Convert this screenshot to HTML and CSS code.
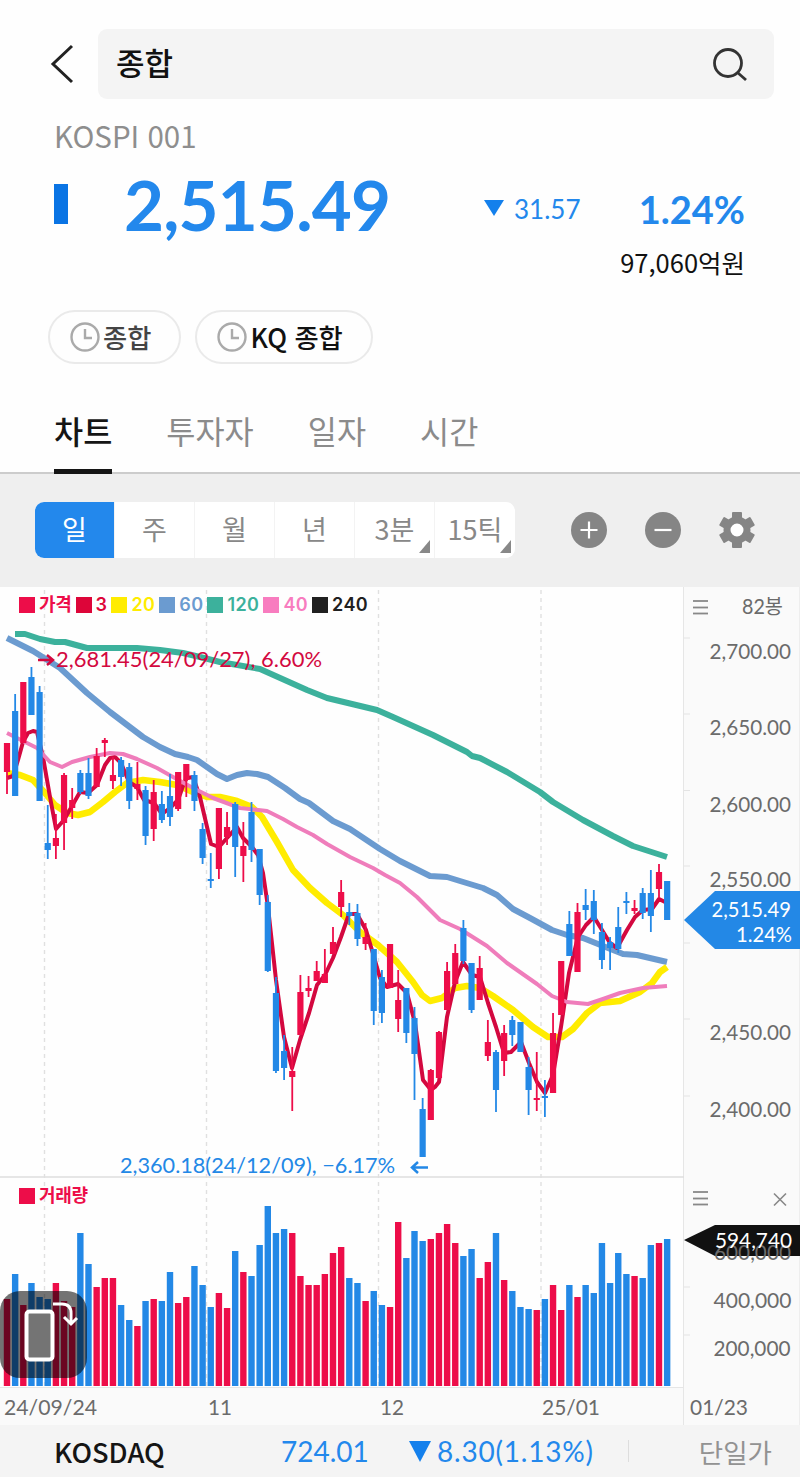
FILE: index.html
```
<!DOCTYPE html>
<html lang="ko">
<head>
    <meta charset="UTF-8">
    <meta name="viewport" content="width=device-width, initial-scale=1.0">
    <title>KOSPI 종합</title>
    <link rel="stylesheet" href="styles.css">
</head>
<body>
    <header class="search-header">
        <svg class="back-icon" width="26" height="42" viewBox="0 0 26 42"><path d="M22 3L3 21l19 18"/></svg>
        <div class="search-box">
            <span>종합</span>
            <svg width="36" height="36" viewBox="0 0 36 36"><circle cx="16" cy="17" r="13.5"/><path d="M25.5 26.5L34 34"/></svg>
        </div>
    </header>

    <section class="quote">
        <div class="quote-code">KOSPI 001</div>
        <div class="quote-row">
            <span class="mini-candle"></span>
            <span class="price">2,515.49</span>
            <span class="arrow-down"></span>
            <span class="change">31.57</span>
            <span class="rate">1.24%</span>
        </div>
        <div class="amount">97,060억원</div>
    </section>

    <div class="recent">
        <div class="chip">
            <svg width="30" height="30" viewBox="0 0 30 30"><circle cx="15" cy="15" r="13.5"/><path d="M15 7v9h7"/></svg>
            <span class="chip-light">종합</span>
        </div>
        <div class="chip">
            <svg width="30" height="30" viewBox="0 0 30 30"><circle cx="15" cy="15" r="13.5"/><path d="M15 7v9h7"/></svg>
            <span>KQ 종합</span>
        </div>
    </div>

    <nav class="tabs">
        <span class="tab active">차트</span>
        <span class="tab">투자자</span>
        <span class="tab">일자</span>
        <span class="tab">시간</span>
    </nav>

    <div class="toolbar">
        <div class="periods">
            <span class="period selected">일</span>
            <span class="period">주</span>
            <span class="period">월</span>
            <span class="period">년</span>
            <span class="period more">3분</span>
            <span class="period more">15틱</span>
        </div>
        <div class="tools">
            <svg width="38" height="38" viewBox="0 0 38 38"><circle cx="19" cy="19" r="18"/><path d="M19 10.5v17M10.5 19h17"/></svg>
            <svg width="38" height="38" viewBox="0 0 38 38"><circle cx="19" cy="19" r="18"/><path d="M10.5 19h17"/></svg>
            <svg width="38" height="38" viewBox="0 0 38 38"><g id="gear"></g><circle class="gear-body" cx="19" cy="19" r="10"/></svg>
        </div>
    </div>

    <main class="chart-area">
        <svg id="chart" class="chart" width="800" height="838" viewBox="0 587 800 838"></svg>
        <div class="legend">
            <span class="c-price">가격</span>
            <span class="c-ma3">3</span>
            <span class="c-ma20">20</span>
            <span class="c-ma60">60</span>
            <span class="c-ma120">120</span>
            <span class="c-ma40">40</span>
            <span class="c-ma240">240</span>
        </div>
        <div class="legend volume-legend"><span class="c-price">거래량</span></div>
        <div class="rotate-button">
            <svg width="87" height="87" viewBox="0 0 87 87">
                <rect x="26.500" y="20.500" width="26" height="48" rx="3"/>
                <path d="M53 13h9q9 0 9 9v10M64 26l7 7 6-6"/>
            </svg>
        </div>
    </main>

    <footer class="ticker">
        <span class="ticker-name">KOSDAQ</span>
        <span class="ticker-price">724.01</span>
        <span class="arrow-down big"></span>
        <span class="ticker-change">8.30(1.13%)</span>
        <span class="ticker-line"></span>
        <span class="ticker-type">단일가</span>
    </footer>

    <script src="chart.js"></script>
</body>
</html>
```

FILE: styles.css
```
* {
    box-sizing: border-box;
}

body {
    margin: 0;
    width: 800px;
    background: #fefefe;
    color: #111;
    font-family: "Noto Sans CJK KR", sans-serif;
}

svg {
    display: block;
    fill: none;
}

.search-header {
    display: flex;
    align-items: center;
    gap: 22px;
    height: 99px;
    padding: 29px 26px 0 50px;
}

.back-icon {
    stroke: #222;
    stroke-width: 3;
}

.search-box {
    flex: 1;
    display: flex;
    align-items: center;
    justify-content: space-between;
    height: 70px;
    padding: 0 26px 0 18px;
    border-radius: 9px;
    background: #f4f4f4;
    font-size: 31px;
    font-weight: 500;
}

.search-box span {
    line-height: 66px;
    padding-bottom: 4px;
}

.search-box svg {
    stroke: #333;
    stroke-width: 2.8;
}

.quote {
    height: 211px;
    padding: 16px 55px 0 54px;
}

.quote-code {
    color: #8e8e8e;
    font-size: 29.5px;
    line-height: 40px;
}

.quote-row {
    display: flex;
    align-items: center;
    height: 92px;
    color: #2388ec;
    font-family: Lato, sans-serif;
}

.mini-candle {
    width: 14px;
    height: 40px;
    margin-top: 6px;
    background: #0a74e4;
}

.price {
    flex: none;
    width: 416px;
    padding: 8px 0 0 56px;
    font-size: 69px;
    font-weight: 700;
    line-height: 92px;
    letter-spacing: -0.8px;
}

.arrow-down {
    border: 10px solid transparent;
    border-top: 16px solid #1480ec;
    border-bottom: 0;
}

.quote-row .arrow-down {
    margin-top: 14px;
}

.change {
    margin-left: 10px;
    font-size: 26px;
    padding-top: 16px;
}

.rate {
    flex: 1;
    text-align: right;
    font-size: 38px;
    font-weight: 700;
    padding-top: 15px;
}

.amount {
    text-align: right;
    font-size: 25.5px;
    line-height: 30px;
}

.recent {
    display: flex;
    gap: 14px;
    padding-left: 48px;
}

.chip {
    display: flex;
    align-items: center;
    height: 54px;
    padding: 0 28px 0 20px;
    border: 2px solid #eaeaea;
    border-radius: 27px;
    font-size: 26.3px;
    font-weight: 500;
    line-height: 48px;
}

.chip span {
    margin-left: 3px;
}

.chip-light {
    color: #444;
}

.chip svg {
    stroke: #aaa;
    stroke-width: 2.4;
}

.tabs {
    display: flex;
    gap: 54px;
    height: 110px;
    padding: 39px 0 0 54px;
    border-bottom: 2px solid #ccc;
}

.tab {
    height: 71px;
    font-size: 31.7px;
    font-weight: 400;
    line-height: 54px;
    color: #8b8b8b;
}

.tab.active {
    border-bottom: 5px solid #151515;
    color: #151515;
    font-weight: 500;
}

.toolbar {
    display: flex;
    align-items: center;
    height: 113px;
    padding: 0 44px 2px 35px;
    justify-content: space-between;
    background: #efefef;
}

.periods {
    display: flex;
    height: 56px;
    border-radius: 9px;
    background: #fff;
    overflow: hidden;
}

.period {
    position: relative;
    width: 80px;
    border-right: 1px solid #f3f3f3;
    color: #888;
    font-size: 27px;
    line-height: 54px;
    text-align: center;
}

.period:last-child {
    border: 0;
}

.period.selected {
    background: #2388ec;
    color: #fff;
}

.period.more::after {
    content: "";
    position: absolute;
    right: 4px;
    bottom: 5px;
    border-left: 11px solid transparent;
    border-bottom: 13px solid #888;
}

.tools {
    display: flex;
    gap: 36px;
}

.tools circle {
    fill: #858585;
}

.tools path {
    stroke: #fff;
    stroke-width: 2.2;
}

.tools #gear rect {
    fill: #858585;
}

.tools .gear-body {
    fill: #fff;
    stroke: #858585;
    stroke-width: 7;
}

.chart-area {
    position: relative;
    height: 838px;
}

.legend {
    position: absolute;
    top: 5px;
    left: 19px;
    display: flex;
    gap: 4px;
    font-family: Inter, "Noto Sans CJK KR", sans-serif;
    font-size: 18px;
    font-weight: 600;
    line-height: 26px;
}

.legend span {
    display: flex;
    align-items: center;
    gap: 4px;
    letter-spacing: 0.4px;
}

.legend span::before {
    content: "";
    width: 16px;
    height: 16px;
    background: currentColor;
}

.volume-legend {
    top: 596px;
}

.c-price { color: #ed0d49; }
.c-ma3 { color: #dd0539; }
.c-ma20 { color: #ffec00; }
.c-ma60 { color: #6b9bd0; }
.c-ma120 { color: #3cb19c; }
.c-ma40 { color: #f87cbf; }
.c-ma240 { color: #202020; }

.legend .c-price {
    letter-spacing: -0.3px;
}

.rotate-button {
    position: absolute;
    left: 0;
    top: 704px;
    border-radius: 20px;
    background: rgba(0, 0, 0, 0.55);
}

.rotate-button svg {
    stroke: #fff;
    stroke-width: 4;
}

.rotate-button rect {
    fill: #747474;
}

.rotate-button path {
    stroke-width: 3;
}

.axis-text {
    fill: #6b6b6b;
    font-family: Lato, "Noto Sans CJK KR", sans-serif;
    font-size: 20.5px;
}

.date-text {
    fill: #6b6b6b;
    font-family: Lato, sans-serif;
    font-size: 22px;
}

.note-text {
    font-family: Lato, sans-serif;
    font-size: 21px;
}

.ticker {
    display: flex;
    align-items: center;
    height: 52px;
    padding: 0 28px 0 54px;
    background: #f4f4f4;
    color: #2388ec;
    font-family: Lato, sans-serif;
    font-size: 28px;
}

.ticker-name {
    width: 227px;
    color: #151515;
    font-family: "Noto Sans CJK KR", sans-serif;
    font-weight: 500;
    font-size: 27.3px;
}

.ticker-price {
    width: 128px;
}

.arrow-down.big {
    border-width: 21px 11px 0;
}

.ticker-change {
    flex: 1;
    margin-left: 6px;
    letter-spacing: 0.8px;
}

.ticker-line {
    width: 1px;
    height: 22px;
    background: #ddd;
}

.ticker-type {
    margin-left: 70px;
    color: #929292;
    font-family: "Noto Sans CJK KR", sans-serif;
    font-size: 26.5px;
}
```

FILE: chart.js
```
const RED = '#ed0d49';
const BLUE = '#2388e6';
const FIRST_X = 7;
const STEP = 8.15;
const VOLUME_BASE = 1386;

// colour, high, body top, body bottom, low, volume top
const candles = [
    ['r', 743, 743, 772, 794, 1299], ['b', 694, 711, 796, 796, 1274], ['r', 682, 682, 743, 743, 1305],
    ['b', 667, 677, 715, 715, 1283], ['b', 686, 692, 801, 801, 1297], ['b', 805, 843, 850, 859, 1299],
    ['r', 814, 838, 846, 859, 1283], ['r', 773, 775, 823, 850, 1301], ['r', 788, 800, 808, 819, 1307],
    ['b', 770, 773, 792, 794, 1233], ['b', 758, 773, 796, 799, 1264], ['r', 748, 756, 787, 787, 1287],
    ['r', 738, 740, 743, 757, 1278], ['r', 757, 775, 781, 789, 1278], ['b', 757, 760, 777, 786, 1305],
    ['b', 763, 767, 801, 809, 1320], ['r', 762, 784, 789, 800, 1326], ['b', 786, 790, 836, 845, 1301],
    ['r', 780, 792, 829, 841, 1299], ['b', 791, 804, 820, 823, 1301], ['b', 774, 796, 817, 826, 1272],
    ['r', 772, 772, 809, 811, 1303], ['r', 764, 764, 780, 797, 1297], ['b', 771, 775, 801, 811, 1266],
    ['b', 823, 829, 858, 864, 1285], ['b', 853, 879, 881, 888, 1307], ['r', 808, 808, 869, 879, 1293],
    ['r', 812, 827, 837, 845, 1308], ['b', 802, 804, 847, 877, 1251], ['r', 822, 846, 856, 882, 1272],
    ['b', 802, 812, 850, 862, 1276], ['b', 849, 849, 895, 905, 1245], ['b', 895, 902, 971, 972, 1206],
    ['b', 977, 993, 1071, 1073, 1233], ['b', 1035, 1051, 1068, 1080, 1229], ['r', 1047, 1071, 1077, 1111, 1233],
    ['r', 975, 992, 1035, 1035, 1276], ['r', 976, 988, 991, 997, 1285], ['r', 961, 971, 981, 981, 1285],
    ['r', 949, 974, 983, 983, 1274], ['r', 927, 942, 954, 954, 1253], ['r', 880, 892, 907, 917, 1247],
    ['b', 903, 912, 916, 925, 1278], ['b', 904, 913, 939, 946, 1283], ['r', 923, 937, 944, 950, 1301],
    ['b', 949, 949, 1011, 1025, 1291], ['b', 970, 977, 1013, 1023, 1305], ['r', 944, 944, 988, 988, 1307],
    ['r', 970, 1000, 1019, 1032, 1222], ['b', 988, 988, 1033, 1043, 1258], ['b', 1007, 1018, 1054, 1100, 1231],
    ['b', 1098, 1109, 1157, 1157, 1241], ['r', 1069, 1070, 1120, 1120, 1239], ['r', 1031, 1032, 1078, 1078, 1233],
    ['r', 962, 971, 1010, 1010, 1224], ['r', 944, 953, 984, 984, 1243], ['b', 920, 928, 961, 964, 1256],
    ['b', 963, 963, 1010, 1013, 1249], ['r', 956, 968, 1000, 1000, 1278], ['r', 1020, 1042, 1056, 1061, 1262],
    ['b', 1050, 1052, 1090, 1112, 1233], ['r', 1025, 1033, 1061, 1076, 1280], ['b', 1016, 1020, 1035, 1046, 1291],
    ['b', 1022, 1022, 1052, 1052, 1307], ['b', 1057, 1067, 1090, 1115, 1309], ['r', 1052, 1098, 1100, 1111, 1310],
    ['b', 1080, 1096, 1098, 1117, 1299], ['r', 1013, 1033, 1093, 1093, 1285], ['r', 961, 961, 1015, 1015, 1310],
    ['b', 911, 924, 956, 956, 1285], ['r', 903, 912, 972, 972, 1297], ['b', 889, 905, 910, 920, 1285],
    ['b', 890, 901, 920, 934, 1293], ['b', 923, 932, 960, 969, 1243], ['b', 937, 942, 948, 970, 1283],
    ['b', 907, 927, 949, 953, 1253], ['b', 892, 901, 903, 914, 1274], ['r', 900, 908, 911, 914, 1276],
    ['b', 888, 893, 913, 919, 1278], ['b', 870, 893, 916, 932, 1245], ['r', 864, 872, 889, 898, 1243],
    ['b', 881, 881, 920, 920, 1239]
];

const averages = [
    { color: '#3cb19c', width: 6, points: '15,634 25,634 40,639 55,642 65,642 87,648 137,648 160,650 183,653 200,657 220,662 260,669 307,690 327,698 377,710 393,717 433,735 467,752 472,756 480,758 507,772 540,792 553,802 583,820 613,836 633,846 667,857' },
    { color: '#6b9bd0', width: 6, points: '7,638 33,651 60,668 87,693 110,712 143,737 160,747 175,754 188,757 197,760 217,774 227,779 237,775 247,773 257,774 268,777 285,788 300,799 309,803 333,821 350,829 380,849 400,861 430,876 447,877 460,881 483,888 497,895 513,909 530,918 552,930 567,935 583,938 603,946 623,954 637,955 667,962' },
    { color: '#ffec00', width: 6.5, points: '7,773 20,775 33,780 45,793 55,805 67,813 78,815 90,812 103,802 115,792 127,783 143,780 160,782 177,785 193,792 207,797 220,797 237,801 252,807 262,817 277,842 293,870 310,888 327,903 343,915 360,932 378,945 397,962 413,982 422,995 430,1001 442,998 455,988 467,986 480,988 493,996 513,1010 533,1027 548,1037 562,1037 573,1029 587,1013 600,1003 620,1001 640,992 652,983 660,972 667,967' },
    { color: '#d3083f', width: 4, points: '7,778 13,776 18,760 23,742 28,733 33,731 37,732 43,757 50,797 56,829 64,820 72,806 80,792 88,793 97,785 105,765 110,758 115,757 121,763 129,782 137,787 144,800 154,803 162,814 170,808 178,800 184,783 187,778 193,777 200,797 211,844 219,847 227,838 237,827 243,838 252,847 258,855 263,873 268,907 276,980 284,1037 292,1068 300,1040 309,1013 317,985 325,975 333,958 341,937 349,914 357,914 366,930 374,957 380,978 387,987 398,984 407,993 415,1023 423,1080 431,1090 435,1087 439,1082 447,1017 455,982 463,962 472,975 480,977 488,1003 496,1027 504,1053 511,1052 521,1042 529,1063 537,1082 545,1093 553,1075 561,1027 569,973 578,937 586,925 594,917 602,930 610,943 617,948 627,930 635,917 643,910 652,909 659,899 667,903' },
    { color: '#ef7dbb', width: 4, points: '7,733 23,741 37,748 50,762 62,767 72,762 90,757 110,753 123,754 137,759 157,768 173,777 193,788 213,798 240,808 267,811 283,819 297,827 313,835 327,844 350,857 373,868 385,875 400,883 417,897 440,920 460,929 487,946 507,963 537,984 552,996 567,1002 588,1004 603,999 620,993 643,988 667,986' }
];

function rect(x, y, w, h, fill) {
    return `<rect x="${x}" y="${y}" width="${w}" height="${h}" fill="${fill}"/>`;
}

function line(x1, y1, x2, y2, stroke, extra = '') {
    return `<line x1="${x1}" y1="${y1}" x2="${x2}" y2="${y2}" stroke="${stroke}" ${extra}/>`;
}

function text(x, y, label, cls, width, extra = '') {
    return `<text x="${x}" y="${y}" class="${cls}" textLength="${width}" lengthAdjust="spacingAndGlyphs" ${extra}>${label}</text>`;
}

let out = '';

// panels and grid
out += rect(0, 1387, 800, 38, '#fafafa') + rect(684, 587, 116, 838, '#fafafa');
out += line(683.5, 587, 683.5, 1425, '#e6e6e6') + line(799.5, 587, 799.5, 1425, '#eeeeee');
out += line(0, 1177, 684, 1177, '#dedede', 'stroke-width="1.5"') + line(0, 1387.5, 684, 1387.5, '#e6e6e6');
[44.5, 206.5, 378.5, 541].forEach(x => {
    out += line(x, 590, x, 1390, '#e0e0e0', 'stroke-dasharray="4 4" stroke-width="1.4"');
});
[638, 714, 790.5, 866, 943, 1019, 1096, 1287, 1335].forEach(y => {
    out += line(684, y, 690, y, '#e4e4e4');
});

averages.forEach(ma => {
    out += `<polyline points="${ma.points}" fill="none" stroke="${ma.color}" stroke-width="${ma.width}" stroke-linejoin="round"/>`;
});

candles.forEach(([type, high, top, bottom, low, volume], i) => {
    const x = FIRST_X + i * STEP;
    const color = type === 'r' ? RED : BLUE;
    out += line(x, high, x, low, color, 'stroke-width="1.8"');
    out += rect(x - 3.1, top, 6.2, bottom - top, color);
    out += rect(x - 3.2, volume, 6.4, VOLUME_BASE - volume, color);
});

// highest and lowest price
out += `<path d="M38 660h14M47 655l6 5-6 5" stroke="#d3083f" stroke-width="2.500"/>`;
out += text(56, 667, '2,681.45(24/09/27), 6.60%', 'note-text', 266, 'fill="#d3083f"');
out += text(120, 1173, '2,360.18(24/12/09), −6.17%', 'note-text', 275, `fill="${BLUE}"`);
out += `<path d="M428 1167.500h-15M418 1162l-6 5.500 6 5.500" stroke="${BLUE}" stroke-width="2.500"/>`;

// price axis
[['2,700.00', 659], ['2,650.00', 735], ['2,600.00', 812], ['2,550.00', 887], ['2,450.00', 1040], ['2,400.00', 1117]].forEach(([label, y]) => {
    out += text(709.5, y, label, 'axis-text', 81.5);
});
out += text(742, 614, '82봉', 'axis-text', 41);
[601, 1192].forEach(y => {
    [0, 6.5, 12.5].forEach(d => {
        out += line(693, y + d, 708, y + d, '#888888', 'stroke-width="1.8"');
    });
});
out += `<path d="M774 1193.500l12 12M786 1193.500l-12 12" stroke="#888" stroke-width="1.6"/>`;
out += `<path d="M684 920l31-29h85v58h-85z" fill="${BLUE}"/>`;
out += text(711.5, 916.5, '2,515.49', 'axis-text', 79.5, 'style="fill:#fff"');
out += text(736, 941.5, '1.24%', 'axis-text', 56, 'style="fill:#fff"');

// volume axis
out += `<path d="M684 1240l31-15h85v31h-85z" fill="#111"/>`;
out += text(714, 1259.5, '600,000', 'axis-text', 77);
out += text(715, 1248, '594,740', 'axis-text', 77, 'style="fill:#fff"');
out += text(713.5, 1308, '400,000', 'axis-text', 78);
out += text(713.5, 1356, '200,000', 'axis-text', 77);

// dates
[[4, '24/09/24', 93], [208, '11', 24], [380, '12', 24], [542, '25/01', 58], [690, '01/23', 58]].forEach(([x, label, w]) => {
    out += text(x, 1414.5, label, 'date-text', w);
});

document.getElementById('chart').innerHTML = out;

// six teeth of the settings gear
let teeth = '';
for (let a = 0; a < 180; a += 60) {
    teeth += `<rect x="14" y="1" width="10" height="9" rx="1" transform="rotate(${a} 19 19)"/>`;
    teeth += `<rect x="14" y="28" width="10" height="9" rx="1" transform="rotate(${a} 19 19)"/>`;
}
document.getElementById('gear').innerHTML = teeth;
```
